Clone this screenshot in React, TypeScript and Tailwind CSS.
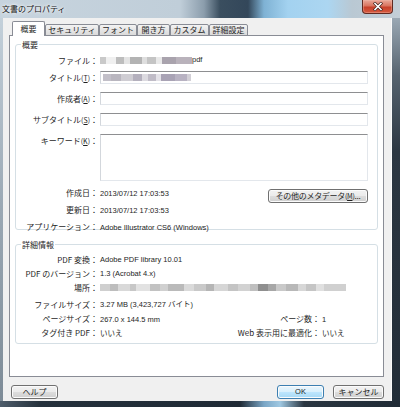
import type { ReactNode } from 'react';

type Part = [number, string];

const fileBlur: Part[] = [
  [6, '#c9c9c9'], [10, '#f0f0f0'], [8, '#bdbdbd'], [6, '#e4e4e4'], [12, '#b3b3b3'],
  [5, '#dedede'], [9, '#c4c4c4'], [6, '#e9e9e9'], [14, '#a9a3ad'], [16, '#b9b2bb'],
];
const titleBlur: Part[] = [
  [8, '#c2bfc8'], [10, '#b9b6bf'], [12, '#cfcdd3'], [9, '#b4b0bd'], [6, '#dcdae0'],
  [8, '#c0bcc7'], [5, '#e4e2e8'], [14, '#a9a3b5'], [12, '#b8b2c2'], [4, '#d2cfd6'],
];
const placeBlur: Part[] = [
  [10, '#cfcfcf'], [8, '#bdbdbd'], [12, '#d9d9d9'], [6, '#c7c7c7'], [14, '#e2e2e2'],
  [10, '#c2c2c2'], [8, '#d0d0d0'], [16, '#bababa'], [10, '#dadada'], [12, '#c9c9c9'],
  [8, '#b5b5b5'], [14, '#d6d6d6'], [10, '#c4c4c4'], [12, '#d2d2d2'], [8, '#bfbfbf'],
  [10, '#8f8f8f'], [8, '#a7a7a7'], [10, '#c9c9c9'], [12, '#b8b8b8'], [8, '#d7d7d7'],
  [10, '#c5c5c5'], [8, '#e0e0e0'], [22, '#d0d0d0'],
];

function Blur({ parts }: { parts: Part[] }) {
  return (
    <div className="flex h-[7px] blur-[0.7px]">
      {parts.map(([w, c], i) => (
        <div key={i} style={{ width: w, background: c }} />
      ))}
    </div>
  );
}

function Val({ children }: { children: ReactNode }) {
  return (
    <span className="text-[7.5px] font-['Liberation_Sans','Noto_Sans_CJK_JP',sans-serif] text-[#1e1e1e]">
      {children}
    </span>
  );
}

function Row({
  label,
  children,
  className = '',
}: {
  label: ReactNode;
  children?: ReactNode;
  className?: string;
}) {
  return (
    <div className={`flex ${className}`}>
      <div className="w-[82px] shrink-0 text-right leading-[13px] whitespace-nowrap">{label}</div>
      <div className="flex-1 ml-[2px] pr-[9px] min-w-0">{children}</div>
    </div>
  );
}

function Input({ h = 'h-[13px]', children }: { h?: string; children?: ReactNode }) {
  return (
    <div
      className={`${h} bg-white border border-[#e3e7ec] border-t-[#8e8f91] border-l-[#d3d7dc] flex items-center pl-[2px]`}
    >
      {children}
    </div>
  );
}

function U({ k }: { k: string }) {
  return (
    <span className="text-[7px]">
      (<span className="underline">{k}</span>)
    </span>
  );
}

function Btn({ children, primary, className = '' }: { children: ReactNode; primary?: boolean; className?: string }) {
  return (
    <div
      className={`h-[14px] rounded-[3px] border flex items-center justify-center leading-none shadow-[inset_0_0_0_1px_#fbfbfb] ${
        primary
          ? 'border-[#3c7fb1] bg-[linear-gradient(#eaf6fd_0%,#d9f0fc_49%,#bee6fd_50%,#a7d9f5_100%)]'
          : 'border-[#707070] bg-[linear-gradient(#f2f2f2_0%,#ebebeb_49%,#dddddd_50%,#cfcfcf_100%)]'
      } ${className}`}
    >
      {children}
    </div>
  );
}

function Tab({ label, active, w }: { label: string; active?: boolean; w: string }) {
  return active ? (
    <div className={`${w} h-[15px] bg-white border border-[#898c95] border-b-0 rounded-t-[2px] flex items-center justify-center leading-none`}>
      {label}
    </div>
  ) : (
    <div
      className={`${w} h-[12px] border border-[#898c95] rounded-t-[2px] bg-[linear-gradient(#f3f3f3,#e6e6e6_50%,#dadada)] flex items-center justify-center leading-none`}
    >
      {label}
    </div>
  );
}

function Group({ title, h, children }: { title: string; h: string; children: ReactNode }) {
  return (
    <div className={`relative mx-[5px] ${h} border border-[#d5dfe5] rounded-[3px] flex flex-col`}>
      <div className="absolute -top-[6px] left-[5px] bg-white px-[1px] leading-[11px]">{title}</div>
      {children}
    </div>
  );
}

export default function App() {
  return (
    <div className="w-[400px] h-[407px] overflow-hidden flex flex-col font-['Noto_Sans_CJK_JP','Noto_Sans',sans-serif] text-[8px] text-[#1e1e1e] bg-[#1f2a35]">
      {/* Title bar (aero glass) */}
      <div className="h-[18px] shrink-0 flex items-start bg-[linear-gradient(90deg,#c7d4de_0%,#c0ced9_45%,#8b9dac_51%,#3a4e5f_55%,#33475a_62%,#7fb2d4_66%,#a3d2f0_72%,#acd6f1_82%,#b9c8d3_88%,#c3ced7_100%)]">
        <div className="pl-[2px] pt-[3px] leading-[12px] text-[8px] text-[#111] [text-shadow:0_0_4px_#fff,0_0_2px_#fff]">
          文書のプロパティ
        </div>
        <div className="flex-1" />
        <div className="w-[31px] h-[14px] mr-[7px] rounded-b-[4px] border border-t-0 border-[#5f2a22] bg-[linear-gradient(#e9a899_0%,#d9745f_45%,#c7402a_55%,#d65a3f_100%)] flex items-center justify-center shadow-[inset_0_0_0_1px_#f0b8aa66]">
          <svg width="10" height="9" viewBox="0 0 10 9">
            <path d="M2 1.5 L8 7.5 M8 1.5 L2 7.5" stroke="#3b1a15" strokeWidth="3" strokeLinecap="square" />
            <path d="M2 1.5 L8 7.5 M8 1.5 L2 7.5" stroke="#fff" strokeWidth="1.6" strokeLinecap="square" />
          </svg>
        </div>
      </div>

      {/* Middle */}
      <div className="flex flex-1 min-h-0">
        <div className="w-[3px] bg-[linear-gradient(#c3d0da,#9aa8b4_50%,#7d8b97)]" />

        {/* Client area */}
        <div className="w-[389px] bg-[#f0f0f0] border-r border-[#fafafa] flex flex-col pt-[3px] pb-[2px]">
          {/* Tabs */}
          <div className="relative z-10 -mb-px ml-[9px] flex items-end h-[15px]">
            <Tab label="概要" active w="w-[33px]" />
            <Tab label="セキュリティ" w="w-[54px]" />
            <Tab label="フォント" w="w-[38px]" />
            <Tab label="開き方" w="w-[33px]" />
            <Tab label="カスタム" w="w-[39px]" />
            <Tab label="詳細設定" w="w-[39px]" />
          </div>

          {/* Tab panel */}
          <div className="ml-[6px] mr-[7px] h-[343px] bg-white border border-[#898c95] pt-[8px] flex flex-col">
            <Group title="概要" h="h-[186px]">
              <div className="pt-[9px]" />
              <Row label="ファイル：" className="h-[12px] items-center">
                <div className="flex items-center">
                  <Blur parts={fileBlur} />
                  <Val>pdf</Val>
                </div>
              </Row>
              <Row label={<>タイトル<U k="T" />：</>} className="mt-[5px]">
                <Input>
                  <Blur parts={titleBlur} />
                </Input>
              </Row>
              <Row label={<>作成者<U k="A" />：</>} className="mt-[7px]">
                <Input />
              </Row>
              <Row label={<>サブタイトル<U k="S" />：</>} className="mt-[7px]">
                <Input />
              </Row>
              <Row label={<>キーワード<U k="K" />：</>} className="mt-[7px]">
                <Input h="h-[47px]" />
              </Row>
              <Row label="作成日：" className="mt-[5px]">
                <div className="flex items-start">
                  <div className="leading-[13px]">
                    <Val>2013/07/12 17:03:53</Val>
                  </div>
                  <div className="flex-1" />
                  <Btn className="mt-[3px] w-[100px] h-[14px] tracking-[-0.3px]">
                    その他のメタデータ<U k="M" />...
                  </Btn>
                </div>
              </Row>
              <Row label="更新日：">
                <div className="leading-[13px]">
                  <Val>2013/07/12 17:03:53</Val>
                </div>
              </Row>
              <Row label="アプリケーション：" className="mt-[3px]">
                <div className="leading-[13px]">
                  <Val>Adobe Illustrator CS6 (Windows)</Val>
                </div>
              </Row>
            </Group>

            <div className="h-[14px]" />

            <Group title="詳細情報" h="h-[100px]">
              <div className="pt-[7px]" />
              <Row label="PDF 変換：" className="h-[14px] items-center">
                <Val>Adobe PDF library 10.01</Val>
              </Row>
              <Row label="PDF のバージョン：" className="h-[14px] items-center">
                <Val>1.3 (Acrobat 4.x)</Val>
              </Row>
              <Row label="場所：" className="h-[14px] items-center mt-[0px]">
                <Blur parts={placeBlur} />
              </Row>
              <Row label="ファイルサイズ：" className="h-[14px] items-center mt-[3px]">
                <Val>3.27 MB (3,423,727 バイト)</Val>
              </Row>
              <div className="flex h-[14px] items-center mt-[1px]">
                <div className="w-[82px] shrink-0 text-right">ページサイズ：</div>
                <div className="flex-1 ml-[2px]">
                  <Val>267.0 x 144.5 mm</Val>
                </div>
                <div className="w-[120px] text-right">ページ数：</div>
                <div className="w-[55px] ml-[2px]">
                  <Val>1</Val>
                </div>
              </div>
              <div className="flex h-[14px] items-center">
                <div className="w-[82px] shrink-0 text-right">タグ付き PDF：</div>
                <div className="flex-1 ml-[2px]">
                  <Val>いいえ</Val>
                </div>
                <div className="w-[120px] text-right whitespace-nowrap">Web 表示用に最適化：</div>
                <div className="w-[55px] ml-[2px]">
                  <Val>いいえ</Val>
                </div>
              </div>
            </Group>
          </div>

          {/* Buttons */}
          <div className="mt-[8px] flex items-center pl-[8px] pr-[7px]">
            <Btn className="w-[47px]">ヘルプ</Btn>
            <div className="flex-1" />
            <Btn primary className="w-[47px]">
              <Val>OK</Val>
            </Btn>
            <Btn className="w-[51px] ml-[9px]">キャンセル</Btn>
          </div>
        </div>

        <div className="flex-1 bg-[linear-gradient(#9aa8b4_0%,#56636f_15%,#2c3742_35%,#222d38_100%)]" />
      </div>

      {/* Bottom frame */}
      <div className="h-[6px] shrink-0 bg-[linear-gradient(90deg,#4e5d6b_0%,#25313c_10%,#1f2a35_60%,#7aa6c6_66%,#9fc8e2_70%,#2a3641_76%,#1f2a35_100%)]" />
    </div>
  );
}
